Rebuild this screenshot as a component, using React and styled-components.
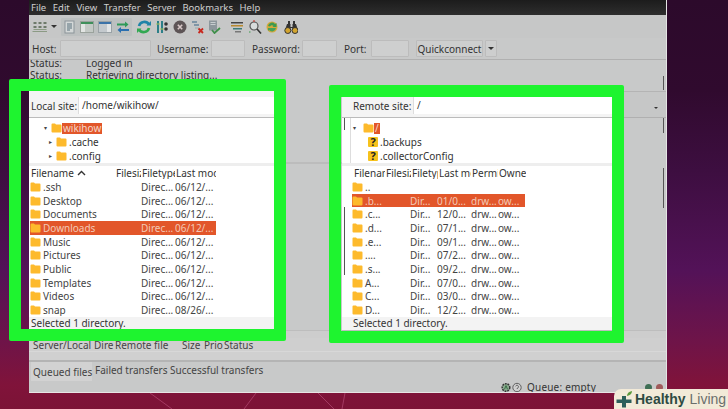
import React from 'react'
import styled, { createGlobalStyle } from 'styled-components';

const GlobalStyle = createGlobalStyle`
  html, body {
    margin: 0;
    padding: 0;
    width: 728px;
    height: 409px;
    overflow: hidden;
    font-family: "Noto Sans", "Open Sans", sans-serif;
  }
`;

const Desktop = styled.div`
  position: relative;
  width: 728px;
  height: 409px;
  overflow: hidden;
  padding-left: 29px;
  box-sizing: border-box;
  background: linear-gradient(180deg, #2c0a2b 0, #300a2e 90px, #3d0e40 170px, #531258 270px, #6e1449 340px, #80133a 385px, #7c1336 409px);
`;

const Wallpaper = styled.svg`
  position: absolute;
  left: 0;
  top: 0;
`;

const Window = styled.div`
  position: relative;
  width: 638px;
  height: 393px;
  display: flex;
  flex-direction: column;
  background: #c8c9c9;
  box-sizing: border-box;
  border-right: 1px solid #e4e4e4;
  border-bottom: 1px solid #e8e4e4;
  color: #333;
  font-size: 10px;
  line-height: 12px;
  overflow: hidden;
`;

const MenuBar = styled.div`
  height: 15px;
  flex: none;
  display: flex;
  gap: 6.6px;
  align-items: center;
  padding-left: 2px;
  background: linear-gradient(180deg, #1c1c1c, #2e2e2e);
  color: #cfcfcf;
  font-size: 9.5px;
`;

const Toolbar = styled.div`
  height: 23px;
  flex: none;
  display: flex;
  align-items: center;
  padding-left: 3px;
  background: #c6c7c7;
`;

const ToolIcon = styled.svg`
  width: ${p => p.$w || 14}px;
  height: 14px;
  flex: none;
  margin-left: ${p => p.$gap || 0}px;
`;

const PressedGroup = styled.div`
  display: flex;
  align-items: center;
  gap: 4px;
  height: 18px;
  margin-left: 4px;
  padding: 0 2px 0 1px;
  background: #bcc0c0;
  border-radius: 1px;
`;

const QuickBar = styled.div`
  height: 22px;
  flex: none;
  display: flex;
  align-items: center;
  padding-left: 3px;
  box-sizing: border-box;
  border-bottom: 1px solid #b0b0b0;
  font-size: 10px;
`;

const QuickLabel = styled.span`
  width: ${p => p.$w}px;
  flex: none;
  white-space: nowrap;
`;

const QuickInput = styled.div`
  width: ${p => p.$w}px;
  height: 17px;
  box-sizing: border-box;
  flex: none;
  margin-right: ${p => p.$gap}px;
  background: #cecfcf;
  border: 1px solid #bcbcbc;
  border-radius: 1px;
`;

const QuickButton = styled.div`
  height: 17px;
  box-sizing: border-box;
  flex: none;
  width: ${p => p.$w}px;
  margin-right: 2px;
  display: flex;
  align-items: center;
  justify-content: center;
  background: #cdcece;
  border: 1px solid #bcbcbc;
  border-radius: 1px;
  white-space: nowrap;
`;

const Caret = styled.div`
  width: 0;
  height: 0;
  border-left: ${p => p.$size || 3}px solid transparent;
  border-right: ${p => p.$size || 3}px solid transparent;
  border-top: ${p => p.$size || 3}px solid #333;
`;

const Log = styled.div`
  position: relative;
  height: 31px;
  flex: none;
  overflow: hidden;
  padding-left: 1px;
`;

const LogLine = styled.div`
  display: flex;
  position: relative;
  top: -3px;
`;

const LogKey = styled.span`
  width: 56px;
`;

const ScrollThumb = styled.div`
  position: absolute;
  left: ${p => p.$x}px;
  top: ${p => p.$y}px;
  width: 1px;
  height: ${p => p.$h}px;
  background: #555;
`;

const Panes = styled.div`
  display: flex;
  flex: none;
  height: 239px;
`;

const Pane = styled.div`
  position: relative;
  flex: none;
  width: ${p => p.$w}px;
  display: flex;
  flex-direction: column;
  background: #fff;
`;

const SiteRow = styled.div`
  height: 27px;
  flex: none;
  display: flex;
  align-items: flex-end;
  box-sizing: border-box;
  padding: 0 0 3px ${p => p.$pad}px;
  background: #f4f4f4;
  font-size: 10px;
  border-bottom: 1px solid #bbb;
`;

const SiteLabel = styled.span`
  flex: none;
  width: ${p => p.$w}px;
  line-height: 16px;
`;

const SiteInput = styled.div`
  flex: 1;
  height: 17px;
  line-height: 17px;
  background: #fff;
  border-left: 1px solid #ddd;
  padding-left: 3px;
`;

const Tree = styled.div`
  height: 45px;
  flex: none;
  box-sizing: border-box;
  padding-top: 3px;
  margin-left: ${p => p.$indent || 0}px;
  border-left: ${p => (p.$indent ? '1px solid #ddd' : 'none')};
`;

const TreeRow = styled.div`
  height: 14px;
  display: flex;
  align-items: center;
  padding-left: ${p => p.$x}px;
`;

const Expander = styled.span`
  width: ${p => p.$w || 7}px;
  flex: none;
  font-size: 6px;
  color: #444;
`;

const TreeName = styled.span`
  margin-left: ${p => (p.$selected ? 0 : 2)}px;
  padding: 0 ${p => (p.$selected ? 1 : 0)}px;
  line-height: 11px;
  background: ${p => (p.$selected ? '#e2562a' : 'transparent')};
  color: ${p => (p.$selected ? '#f4d6c8' : '#333')};
`;

const Unknown = styled.span`
  width: 10px;
  height: 10px;
  flex: none;
  background: #f6c21c;
  border-radius: 1px;
  color: #222;
  font-size: 11px;
  font-weight: 700;
  line-height: 10px;
  text-align: center;
`;

const Splitter = styled.div`
  height: 3px;
  flex: none;
  background: #eeeeee;
`;

const ListHead = styled.div`
  height: 14px;
  flex: none;
  width: ${p => p.$width}px;
  margin-left: ${p => p.$x}px;
  display: grid;
  grid-template-columns: ${p => p.$cols};
  align-items: center;
`;

const HeadCell = styled.span`
  display: flex;
  align-items: center;
  gap: 3px;
  overflow: hidden;
  white-space: nowrap;
  padding-left: 1px;
`;

const ListBody = styled.div`
  flex: 1;
`;

const FileRow = styled.div`
  height: 13.7px;
  width: ${p => p.$width}px;
  margin-left: ${p => p.$x}px;
  display: grid;
  grid-template-columns: ${p => p.$cols};
  align-items: center;
  background: ${p => (p.$selected ? '#e2562a' : 'transparent')};
  color: ${p => (p.$selected ? '#f2c9b6' : '#444')};
`;

const FileName = styled.span`
  display: flex;
  align-items: center;
  gap: 2px;
  white-space: nowrap;
  overflow: hidden;
`;

const FileCell = styled.span`
  white-space: nowrap;
  overflow: hidden;
`;

const StatusLine = styled.div`
  height: 13px;
  flex: none;
  box-sizing: border-box;
  padding-left: ${p => p.$pad}px;
  background: #f3f3f3;
  white-space: nowrap;
`;

const Gutter = styled.div`
  flex: ${p => (p.$w ? 'none' : 1)};
  width: ${p => p.$w || 0}px;
  display: flex;
  flex-direction: column;
`;

const GutterCombo = styled.div`
  height: 27px;
  flex: none;
  box-sizing: border-box;
  padding: 15px 0 0 39px;
  border-top: 1px solid #b4b4b4;
  border-bottom: 1px solid #b0b0b0;
  background: #c6c7c7;
`;

const GutterRule = styled.div`
  margin-top: ${p => p.$top}px;
  height: 2px;
  flex: none;
  background: #bcbcbc;
`;

const GutterScroll = styled.div`
  margin-top: ${p => p.$top}px;
  margin-left: ${p => p.$x}px;
  width: 1px;
  height: ${p => p.$h}px;
  flex: none;
  background: #555;
`;

const QueueBand = styled.div`
  height: 8px;
  flex: none;
  background: #cdcdcd;
  border-top: 1px solid #bdbdbd;
  box-sizing: border-box;
`;

const QueueHead = styled.div`
  height: 14px;
  flex: none;
  display: flex;
  align-items: flex-end;
  box-sizing: border-box;
  background: #cfcfcf;
  border-bottom: 1px solid #d8d8d8;
  color: #444;
`;

const QueueCol = styled.span`
  flex: none;
  width: ${p => p.$w}px;
  padding-left: ${p => p.$pad || 0}px;
  box-sizing: border-box;
  white-space: nowrap;
  overflow: hidden;
`;

const QueueBody = styled.div`
  height: 10px;
  flex: none;
  box-sizing: border-box;
  background: #d0d0d0;
  border-bottom: 2px solid #b4b4b4;
`;

const Tabs = styled.div`
  height: 19px;
  flex: none;
  display: flex;
  padding-left: 2px;
  color: #444;
`;

const Tab = styled.div`
  width: ${p => p.$w}px;
  flex: none;
  box-sizing: border-box;
  padding: ${p => (p.$active ? '4px 0 0 2px' : '2px 0 0 3px')};
  white-space: nowrap;
  background: ${p => (p.$active ? '#d2d2d2' : 'transparent')};
`;

const StatusBar = styled.div`
  flex: 1;
  display: flex;
  align-items: center;
  padding-left: 472px;
  gap: 1px;
`;

const QueueText = styled.span`
  margin-left: 4px;
  width: 117px;
  flex: none;
  letter-spacing: 0.2px;
`;

const Led = styled.span`
  width: 7px;
  height: 7px;
  flex: none;
  margin-right: 3px;
  border-radius: 50%;
  background: ${p => p.$color};
`;

const GreenFrame = styled.div`
  position: absolute;
  left: ${p => p.$x}px;
  top: ${p => p.$y}px;
  width: ${p => p.$w}px;
  height: ${p => p.$h}px;
  box-sizing: border-box;
  border: 12.5px solid #1ef42f;
  border-radius: 2px;
`;

const Badge = styled.div`
  position: absolute;
  right: 0;
  bottom: 0;
  width: 114px;
  height: 20px;
  display: flex;
  align-items: center;
  gap: 2px;
  box-sizing: border-box;
  padding-left: 2px;
  background: #f2ead8;
  border-top-left-radius: 7px;
  font-family: "Liberation Sans", Arial, sans-serif;
  font-size: 14px;
  white-space: nowrap;
`;

const BadgeStrong = styled.span`
  color: #2e4a42;
  font-weight: 700;
`;

const BadgeLight = styled.span`
  color: #6a6f6c;
  margin-left: 2px;
`;

const Folder = ({ w = 11 }) => (
    <svg width={w} height="10" viewBox="0 0 11 10" style={{ flex: 'none' }}>
        <path d="M0.5 1.5q0-1 1-1h2.5l1 1h4.5q1 0 1 1v6q0 1-1 1h-8q-1 0-1-1z" fill="#fdba2c" />
    </svg>
);

const TOOL = {
    site: (
        <g fill="#6d7a6a">
            <path d="M1 2h3v2H1zM6 2h3v2H6zM11 2h3v2h-3zM1 6h3v2H1zM6 6h3v2H6zM11 6h3v2h-3z" />
            <path d="M0 11h15v1H0zM1 9h13v1H1z" fill="#8b9a84" />
        </g>
    ),
    doc: (
        <g>
            <rect x="3" y="1" width="9" height="12" fill="#d4d8d8" stroke="#8b9499" />
            <path d="M5 4h5M5 6h5M5 8h5M5 10h3" stroke="#59707c" />
        </g>
    ),
    local: (
        <g>
            <rect x="0.5" y="1.5" width="13" height="11" fill="#c3c9c5" stroke="#9aa29c" />
            <rect x="1" y="2" width="12" height="2" fill="#3f8f5a" />
            <rect x="1" y="4" width="4" height="8" fill="#e2e5e3" />
        </g>
    ),
    remote: (
        <g>
            <rect x="0.5" y="1.5" width="13" height="11" fill="#c3c9cd" stroke="#9aa2a6" />
            <rect x="1" y="2" width="12" height="2" fill="#3b73a8" />
            <rect x="9" y="4" width="4" height="8" fill="#e2e5e6" />
        </g>
    ),
    transfer: (
        <g strokeWidth="2" fill="none">
            <path d="M1 4.5h10" stroke="#2e9a58" />
            <path d="M9 1.5l3.5 3-3.5 3z" fill="#2e9a58" />
            <path d="M13 10h-10" stroke="#2a6fb0" />
            <path d="M5 7l-3.5 3 3.5 3z" fill="#2a6fb0" />
        </g>
    ),
    refresh: (
        <g fill="none" strokeWidth="2.6">
            <path d="M12 4.5A5.5 5.5 0 0 0 2 6" stroke="#1f83a8" />
            <path d="M2 9.5A5.5 5.5 0 0 0 12 8" stroke="#32a852" />
            <path d="M9.5 5.5h4.5v-4.5z" fill="#1f83a8" />
            <path d="M4.5 8.5H0v4.5z" fill="#32a852" />
        </g>
    ),
    queue: (
        <g>
            <path d="M2 1h2v12H2zM6 1h2v12H6z" fill="#2c7f88" />
            <circle cx="11" cy="4" r="1.8" fill="#333" />
            <circle cx="11" cy="9" r="1.8" fill="#333" />
            <path d="M1 4h4M5 9h4" stroke="#a5c05a" />
        </g>
    ),
    cancel: (
        <g>
            <circle cx="7" cy="7" r="6.5" fill="#5d5456" />
            <path d="M4.8 4.8l4.4 4.4M9.2 4.8l-4.4 4.4" stroke="#d8c8c8" strokeWidth="1.6" />
        </g>
    ),
    disconnect: (
        <g>
            <path d="M1 1h5v2H1zM3 4h5v2H3z" fill="#7f95a5" />
            <path d="M4 8h4" stroke="#9aa" />
            <path d="M7.5 8.5l4.5 4.5M12 8.5l-4.5 4.5" stroke="#c8281e" strokeWidth="1.8" />
        </g>
    ),
    reconnect: (
        <g>
            <rect x="2" y="0.5" width="8" height="10" fill="#8d979c" />
            <path d="M3.5 2.5h5M3.5 4.5h5" stroke="#c7cdcf" />
            <path d="M5 10l2.5 3 5.5-5" fill="none" stroke="#3f8f4a" strokeWidth="1.8" />
        </g>
    ),
    filter: (
        <g>
            <path d="M1 2h12v1.5H1z" fill="#444" />
            <path d="M1 5h12v1.5H1z" fill="#b8892e" />
            <path d="M3 8h9v1.5H3z" fill="#3d7a78" />
            <path d="M5 11h6v1.5H5z" fill="#777" />
        </g>
    ),
    search: (
        <g fill="none">
            <circle cx="6" cy="6" r="4" stroke="#555" strokeWidth="1.2" fill="#d8dcdc" />
            <path d="M9 9l4 4.5" stroke="#333" strokeWidth="1.6" />
            <path d="M1 12h1.5" stroke="#3a9a4a" />
            <path d="M5 1h2" stroke="#c8281e" />
        </g>
    ),
    sync: (
        <g>
            <circle cx="7" cy="7" r="5.5" fill="#d6a83a" />
            <path d="M3 6a4 4 0 0 1 7-2l1.5-1v4h-4l1-1a2 2 0 0 0-3.5.5z" fill="#3c9a50" />
            <path d="M11 8a4 4 0 0 1-7 2l-1 1V8h3.5z" fill="#46a25a" />
        </g>
    ),
    binoculars: (
        <g>
            <path d="M4 1h2v4H4zM9 1h2v4H9z" fill="#333" />
            <path d="M3 4h3.5v3h2V4H12l2 6H8.5V8h-2v2H1z" fill="#333" />
            <circle cx="3.8" cy="10.5" r="3" fill="#d2a42e" stroke="#333" />
            <circle cx="11" cy="10.5" r="3" fill="#d2a42e" stroke="#333" />
        </g>
    ),
};

const Tool = ({ name, gap, w }) => (
    <ToolIcon $gap={gap} $w={w} viewBox="0 0 14 14">{TOOL[name]}</ToolIcon>
);

const LEFT_COLS = '85px 26px 34px 41px';
const RIGHT_ROW_COLS = '58px 27px 34px 27px 27px';
const RIGHT_HEAD_COLS = '32px 26px 27px 33px 27px 28px';

const LOCAL_FILES = [
    ['.ssh', '06/12/...'],
    ['Desktop', '06/12/...'],
    ['Documents', '06/12/...'],
    ['Downloads', '06/12/...', true],
    ['Music', '06/12/...'],
    ['Pictures', '06/12/...'],
    ['Public', '06/12/...'],
    ['Templates', '06/12/...'],
    ['Videos', '06/12/...'],
    ['snap', '08/26/...'],
];

const REMOTE_FILES = [
    ['..'],
    ['.b...', 'Dir...', '01/0...', true],
    ['.c...', 'Dir...', '12/0...'],
    ['.d...', 'Dir...', '07/1...'],
    ['.e...', 'Dir...', '09/1...'],
    ['....', 'Dir...', '07/2...'],
    ['.s...', 'Dir...', '09/2...'],
    ['A...', 'Dir...', '07/0...'],
    ['C...', 'Dir...', '03/0...'],
    ['D...', 'Dir...', '12/2...'],
];

export default function App() {
    return (
        <Desktop>
            <GlobalStyle />
            <Wallpaper width="728" height="409">
                <path d="M150 393l22 16M256 393l-12 16M318 393l16 16M345 393l-3 16" stroke="#a43a62" fill="none" />
            </Wallpaper>
            <Window>
                <MenuBar>
                    <span>File</span><span>Edit</span><span>View</span><span>Transfer</span>
                    <span>Server</span><span>Bookmarks</span><span>Help</span>
                </MenuBar>
                <Toolbar>
                    <Tool name="site" w={15} />
                    <Caret style={{ marginLeft: 4 }} />
                    <PressedGroup>
                        <Tool name="doc" />
                        <Tool name="local" />
                        <Tool name="remote" />
                        <Tool name="transfer" />
                    </PressedGroup>
                    <Tool name="refresh" gap={5} />
                    <Tool name="queue" gap={4} />
                    <Tool name="cancel" gap={4} />
                    <Tool name="disconnect" gap={4} />
                    <Tool name="reconnect" gap={2} />
                    <Tool name="filter" gap={9} />
                    <Tool name="search" gap={4} />
                    <Tool name="sync" gap={3} />
                    <Tool name="binoculars" gap={5} />
                </Toolbar>
                <QuickBar>
                    <QuickLabel $w={28}>Host:</QuickLabel>
                    <QuickInput $w={91} $gap={6} />
                    <QuickLabel $w={54}>Username:</QuickLabel>
                    <QuickInput $w={34} $gap={7} />
                    <QuickLabel $w={50}>Password:</QuickLabel>
                    <QuickInput $w={35} $gap={7} />
                    <QuickLabel $w={27}>Port:</QuickLabel>
                    <QuickInput $w={38} $gap={7} />
                    <QuickButton $w={67}>Quickconnect</QuickButton>
                    <QuickButton $w={12}><Caret /></QuickButton>
                </QuickBar>
                <Log>
                    <LogLine><LogKey>Status:</LogKey><span>Logged in</span></LogLine>
                    <LogLine><LogKey>Status:</LogKey><span>Retrieving directory listing...</span></LogLine>
                    <ScrollThumb $x={634} $y={16} $h={14} />
                </Log>
                <Panes>
                    <Pane $w={250}>
                        <SiteRow $pad={2}>
                            <SiteLabel $w={47}>Local site:</SiteLabel>
                            <SiteInput>/home/wikihow/</SiteInput>
                        </SiteRow>
                        <Tree>
                            <TreeRow $x={15}>
                                <Expander>▾</Expander>
                                <Folder />
                                <TreeName $selected>wikihow</TreeName>
                            </TreeRow>
                            <TreeRow $x={20}>
                                <Expander>▸</Expander>
                                <Folder />
                                <TreeName>.cache</TreeName>
                            </TreeRow>
                            <TreeRow $x={20}>
                                <Expander>▸</Expander>
                                <Folder />
                                <TreeName>.config</TreeName>
                            </TreeRow>
                        </Tree>
                        <Splitter />
                        <ListHead $width={186} $x={1} $cols={LEFT_COLS}>
                            <HeadCell>
                                Filename
                                <svg width="9" height="6" viewBox="0 0 9 6">
                                    <path d="M1 5l3.5-3.5L8 5" fill="none" stroke="#333" strokeWidth="1.4" />
                                </svg>
                            </HeadCell>
                            <HeadCell>Filesize</HeadCell>
                            <HeadCell>Filetype</HeadCell>
                            <HeadCell>Last mod</HeadCell>
                        </ListHead>
                        <ListBody>
                            {LOCAL_FILES.map(([name, date, selected]) => (
                                <FileRow key={name} $width={186} $x={1} $cols={LEFT_COLS} $selected={selected}>
                                    <FileName><Folder />{name}</FileName>
                                    <FileCell />
                                    <FileCell>Direc...</FileCell>
                                    <FileCell>{date}</FileCell>
                                </FileRow>
                            ))}
                        </ListBody>
                        <StatusLine $pad={2}>Selected 1 directory.</StatusLine>
                    </Pane>
                    <Gutter $w={63}>
                        <GutterRule $top={71} />
                    </Gutter>
                    <Pane $w={273}>
                        <SiteRow $pad={11}>
                            <SiteLabel $w={60}>Remote site:</SiteLabel>
                            <SiteInput>/</SiteInput>
                        </SiteRow>
                        <Tree $indent={8}>
                            <TreeRow $x={2}>
                                <Expander $w={10}>▾</Expander>
                                <Folder />
                                <TreeName $selected>/</TreeName>
                            </TreeRow>
                            <TreeRow $x={17}>
                                <Unknown>?</Unknown>
                                <TreeName>.backups</TreeName>
                            </TreeRow>
                            <TreeRow $x={17}>
                                <Unknown>?</Unknown>
                                <TreeName>.collectorConfig</TreeName>
                            </TreeRow>
                        </Tree>
                        <Splitter />
                        <ListHead $width={173} $x={11} $cols={RIGHT_HEAD_COLS}>
                            <HeadCell>Filename</HeadCell>
                            <HeadCell>Filesize</HeadCell>
                            <HeadCell>Filetype</HeadCell>
                            <HeadCell>Last mod</HeadCell>
                            <HeadCell>Permissions</HeadCell>
                            <HeadCell>Owner</HeadCell>
                        </ListHead>
                        <ListBody>
                            {REMOTE_FILES.map(([name, type, date, selected]) => (
                                <FileRow key={name} $width={173} $x={10} $cols={RIGHT_ROW_COLS} $selected={selected}>
                                    <FileName><Folder />{name}</FileName>
                                    <FileCell>{type}</FileCell>
                                    <FileCell>{date}</FileCell>
                                    <FileCell>{type && 'drw...'}</FileCell>
                                    <FileCell>{type && 'ow...'}</FileCell>
                                </FileRow>
                            ))}
                        </ListBody>
                        <StatusLine $pad={11}>Selected 1 directory.</StatusLine>
                        <ScrollThumb $x={2} $y={116} $h={68} />
                        <ScrollThumb $x={2} $y={27} $h={12} />
                    </Pane>
                    <Gutter>
                        <GutterCombo><Caret $size={2} /></GutterCombo>
                        <GutterScroll $x={48} $top={0} $h={15} />
                        <GutterScroll $x={48} $top={35} $h={40} />
                    </Gutter>
                </Panes>
                <QueueBand />
                <QueueHead>
                    <QueueCol $w={65} $pad={4}>Server/Local</QueueCol>
                    <QueueCol $w={21}>Dire</QueueCol>
                    <QueueCol $w={67}>Remote file</QueueCol>
                    <QueueCol $w={22}>Size</QueueCol>
                    <QueueCol $w={20}>Prio</QueueCol>
                    <QueueCol $w={40}>Status</QueueCol>
                </QueueHead>
                <QueueBody />
                <Tabs>
                    <Tab $active $w={61}>Queued files</Tab>
                    <Tab $w={75}>Failed transfers</Tab>
                    <Tab $w={100}>Successful transfers</Tab>
                </Tabs>
                <StatusBar>
                    <svg width="11" height="11" viewBox="0 0 11 11">
                        <circle cx="5.5" cy="5.5" r="4.2" fill="#8ba88f" stroke="#333" strokeWidth="1.6" strokeDasharray="2 1" />
                        <path d="M3.8 7.5l1.7-4 1.7 4" fill="none" stroke="#2c6a3a" />
                    </svg>
                    <svg width="11" height="11" viewBox="0 0 11 11">
                        <circle cx="5.5" cy="5.5" r="4.6" fill="#cfcfcf" stroke="#555" />
                        <path d="M4 4.2a1.6 1.6 0 1 1 2 2l-.5 1" fill="none" stroke="#555" />
                    </svg>
                    <QueueText>Queue: empty</QueueText>
                    <Led $color="#3f6f55" />
                    <Led $color="#a05a5a" />
                </StatusBar>
            </Window>
            <GreenFrame $x={9} $y={79} $w={277} $h={262} />
            <GreenFrame $x={329} $y={85} $w={295} $h={258} />
            <Badge>
                <svg width="17" height="18" viewBox="0 0 17 18" style={{ flex: 'none' }}>
                    <path d="M6 6h4v3.5h5.5v3.5H10v4.5H6V13H0.5V9.5H6z" fill="#2b5f5a" />
                    <path d="M11 6q0-4 5-5q0 4-5 5z" fill="#5c9a3c" />
                </svg>
                <BadgeStrong>Healthy</BadgeStrong>
                <BadgeLight>Living</BadgeLight>
            </Badge>
        </Desktop>
    )
}
